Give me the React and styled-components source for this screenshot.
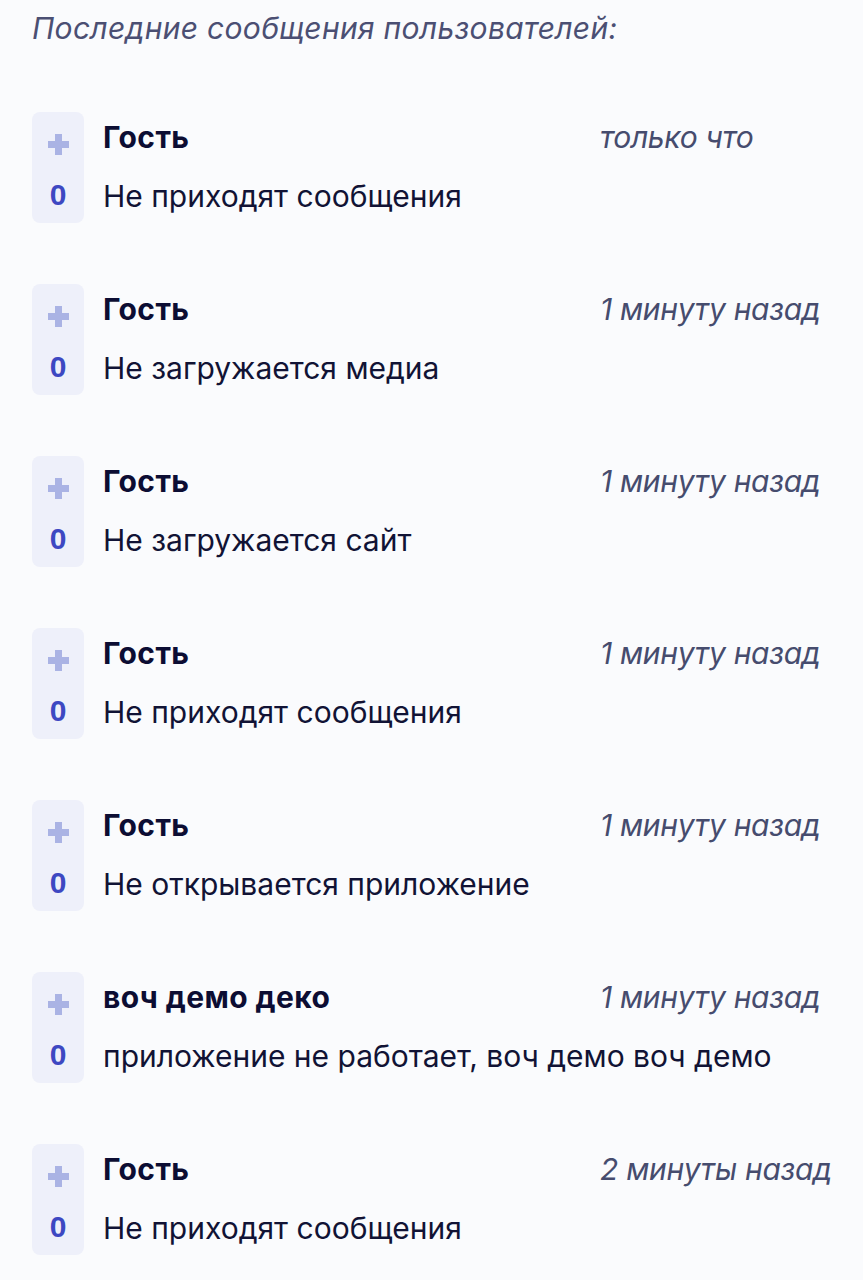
import styled, { createGlobalStyle } from 'styled-components'

const GlobalStyle = createGlobalStyle`
  html, body {
    margin: 0;
    padding: 0;
    background: #fafbfd;
  }
  body {
    font-family: Inter, "Noto Sans", sans-serif;
  }
`

const messages = [
  { name: 'Гость', text: 'Не приходят сообщения', time: 'только что' },
  { name: 'Гость', text: 'Не загружается медиа', time: '1 минуту назад' },
  { name: 'Гость', text: 'Не загружается сайт', time: '1 минуту назад' },
  { name: 'Гость', text: 'Не приходят сообщения', time: '1 минуту назад' },
  { name: 'Гость', text: 'Не открывается приложение', time: '1 минуту назад' },
  { name: 'воч демо деко', text: 'приложение не работает, воч демо воч демо', time: '1 минуту назад' },
  { name: 'Гость', text: 'Не приходят сообщения', time: '2 минуты назад' },
]

const PlusIcon = () => (
  <svg width="21" height="21" viewBox="0 0 21 21">
    <rect x="7" y="0" width="7" height="21" fill="#aab3e4" />
    <rect x="0" y="7" width="21" height="7" fill="#aab3e4" />
  </svg>
)

const App = () => {
  return (
    <Page>
      <GlobalStyle />
      <Title>Последние сообщения пользователей:</Title>
      <List>
        {messages.map((m, i) => (
          <Row key={i}>
            <Votes>
              <PlusIcon />
              <Count>0</Count>
            </Votes>
            <Body>
              <Header>
                <Name>{m.name}</Name>
                <Time>{m.time}</Time>
              </Header>
              <Text>{m.text}</Text>
            </Body>
          </Row>
        ))}
      </List>
    </Page>
  )
}

const Page = styled.div`
  padding: 8px 0 0 32px;
  min-height: 1272px;
  box-sizing: border-box;
`

const Title = styled.div`
  font-style: italic;
  font-size: 30px;
  line-height: 40px;
  letter-spacing: 0.3px;
  color: #4b4f73;
`

const List = styled.div`
  display: flex;
  flex-direction: column;
  gap: 61px;
  margin-top: 64px;
`

const Row = styled.div`
  display: flex;
  gap: 19px;
`

const Votes = styled.div`
  width: 52px;
  height: 111px;
  border-radius: 8px;
  background: #eef0fa;
  display: flex;
  flex-direction: column;
  align-items: center;
  padding-top: 22px;
  box-sizing: border-box;
  gap: 24px;
`

const Count = styled.div`
  font-family: "Liberation Sans", Arial, sans-serif;
  font-weight: 700;
  font-size: 30px;
  line-height: 32px;
  color: #3d48c2;
`

const Body = styled.div`
  display: flex;
  flex-direction: column;
  padding-top: 6px;
`

const Header = styled.div`
  display: grid;
  grid-template-columns: 497px auto;
  align-items: center;
`

const Name = styled.div`
  font-weight: 700;
  font-size: 30px;
  line-height: 38px;
  letter-spacing: 0.4px;
  color: #0c0d33;
`

const Time = styled.div`
  font-style: italic;
  font-size: 30px;
  line-height: 38px;
  letter-spacing: -0.3px;
  color: #464c6e;
`

const Text = styled.div`
  font-size: 30px;
  line-height: 38px;
  margin-top: 21px;
  color: #111335;
`

export default App
